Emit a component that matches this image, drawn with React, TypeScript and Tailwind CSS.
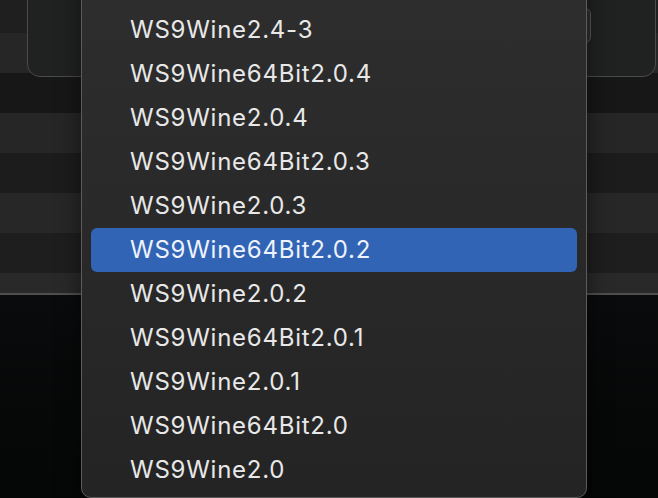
import React from "react";

const versions: string[] = [
  "WS9Wine2.4-3",
  "WS9Wine64Bit2.0.4",
  "WS9Wine2.0.4",
  "WS9Wine64Bit2.0.3",
  "WS9Wine2.0.3",
  "WS9Wine64Bit2.0.2",
  "WS9Wine2.0.2",
  "WS9Wine64Bit2.0.1",
  "WS9Wine2.0.1",
  "WS9Wine64Bit2.0",
  "WS9Wine2.0",
];

const selected = "WS9Wine64Bit2.0.2";

// table rows behind the sheet
const stripes = [
  { h: "h-[33px]", bg: "bg-[#1f1f1f]" },
  { h: "h-[40px]", bg: "bg-[#262626]" },
  { h: "h-[40px]", bg: "bg-[#171717]" },
  { h: "h-[40px]", bg: "bg-[#262626]" },
  { h: "h-[40px]", bg: "bg-[#1c1c1c]" },
  { h: "h-[40px]", bg: "bg-[#272727]" },
  { h: "h-[40px]", bg: "bg-[#1e1e1e]" },
  { h: "h-[20px]", bg: "bg-[#292929]" },
];

export default function App() {
  return (
    <div
      className="relative w-[658px] h-[498px] overflow-hidden bg-gradient-to-b from-[#111416] to-[#050606]"
      style={{ fontFamily: "Inter, 'Liberation Sans', sans-serif" }}
    >
      <div className="flex flex-col border-b-2 border-[#4f4f4f]">
        {stripes.map((s, i) => (
          <div key={i} className={`${s.h} ${s.bg}`} />
        ))}
      </div>

      {/* sheet panel peeking in from the top */}
      <div className="absolute left-[27px] right-[2px] top-[-20px] h-[97px] rounded-b-[13px] border border-[#4b4b4b] bg-[#202121]">
        <div className="absolute right-[64px] top-[27px] w-[90px] h-[35px] rounded-[6px] border border-[#5a5a5a] bg-[#2e2e2e]" />
      </div>

      {/* popup menu */}
      <div className="absolute left-[81px] top-[-40px] w-[506px] h-[538px] rounded-[10px] border border-[#5c5c5c] bg-gradient-to-b from-[#2e2e2e] to-[#242424] shadow-[0_8px_24px_rgba(0,0,0,0.5)]">
        <div className="flex flex-col pt-[47px]">
          {versions.map((v) => {
            const active = v === selected;
            return (
              <div
                key={v}
                className={
                  active
                    ? "mx-[9px] h-[44px] flex items-center pl-[39px] rounded-[6px] bg-[#3164b5] text-[#eef2fa] text-[24px] tracking-[0.75px]"
                    : "mx-[9px] h-[44px] flex items-center pl-[39px] rounded-[6px] text-[#e8e8e8] text-[24px] tracking-[0.75px]"
                }
              >
                {v}
              </div>
            );
          })}
        </div>
      </div>
    </div>
  );
}
